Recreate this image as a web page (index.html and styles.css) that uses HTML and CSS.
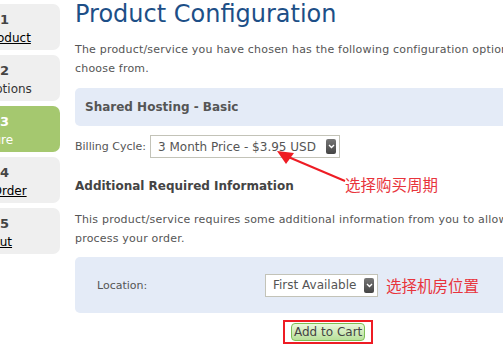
FILE: index.html
```html
<!DOCTYPE html>
<html lang="en">
<head>
    <meta charset="UTF-8">
    <title>Product Configuration</title>
    <link rel="stylesheet" href="styles.css">
</head>
<body>
    <div class="page">
        <div class="steps">
            <div class="step"><span class="step-num">1</span><a class="step-label" href="#">Choose Product</a></div>
            <div class="step"><span class="step-num">2</span><span class="step-label">Product Options</span></div>
            <div class="step active"><span class="step-num">3</span><span class="step-label">Configure</span></div>
            <div class="step"><span class="step-num">4</span><a class="step-label" href="#">Confirm Order</a></div>
            <div class="step"><span class="step-num">5</span><a class="step-label" href="#">Checkout</a></div>
        </div>

        <div class="content">
            <h1>Product Configuration</h1>
            <p class="intro">The product/service you have chosen has the following configuration options for you to choose from.</p>

            <div class="box box-title">Shared Hosting - Basic</div>

            <div class="field-row">
                <span class="field-label">Billing Cycle:</span>
                <div class="fake-select billing">
                    <span>3 Month Price - $3.95 USD</span>
                    <span class="select-btn"><svg width="7" height="5" viewBox="0 0 7 5"><path d="M1 1 L3.5 3.5 L6 1" stroke="#fff" stroke-width="1.4" fill="none"/></svg></span>
                </div>
            </div>

            <h2>Additional Required Information</h2>
            <p class="intro intro-extra">This product/service requires some additional information from you to allow us to process your order.</p>

            <div class="box box-fields">
                <span class="field-label loc">Location:</span>
                <div class="fake-select location">
                    <span>First Available</span>
                    <span class="select-btn"><svg width="7" height="5" viewBox="0 0 7 5"><path d="M1 1 L3.5 3.5 L6 1" stroke="#fff" stroke-width="1.4" fill="none"/></svg></span>
                </div>
                <span class="note">选择机房位置</span>
            </div>

            <div class="actions">
                <span class="highlight"><button class="cart-btn">Add to Cart</button></span>
            </div>
        </div>
    </div>

    <!-- annotation arrow -->
    <div class="annotation">
        <svg width="120" height="50" viewBox="0 0 120 50">
            <line x1="71" y1="32" x2="12" y2="7" stroke="#ee1c24" stroke-width="2"/>
            <polygon points="3,2 20,4 12,15" fill="#ee1c24"/>
        </svg>
        <span class="note billing-note">选择购买周期</span>
    </div>
</body>
</html>
```

FILE: styles.css
```css
* { box-sizing: border-box; }

body {
    margin: 0;
    overflow: hidden;
    font-family: "DejaVu Sans", Verdana, sans-serif;
    font-size: 11px;
    color: #555;
    background: #fff;
}

.page { display: flex; width: 640px; position: relative; }

/* left step tabs, partly off screen */
.steps { width: 75px; flex: none; padding-top: 4px; }

.step {
    width: 152px; height: 46px; margin-left: -92px; margin-bottom: 5px;
    background: #efefef; border-radius: 7px;
    display: flex; flex-direction: column; align-items: center;
    padding-top: 8px; color: #333;
}
.step-num {
    align-self: flex-start; padding-left: 92px;
    font-weight: bold; font-size: 13px; line-height: 16px; color: #444;
}
.step-label { font-size: 12px; line-height: 20px; color: #333; }
a.step-label { color: #000; text-decoration: underline; }
.step.active { background: #a5c86f; }
.step.active .step-num, .step.active .step-label { color: #fff; }

.content { width: 511px; flex: none; }

h1 {
    margin: 0; font-weight: normal; font-size: 24px; line-height: 28px;
    color: #1d4f87;
}

.intro { margin: 12px 0 0; line-height: 19px; letter-spacing: 0.2px; }
.intro-extra { margin-top: 16px; }

.box { background: #e4ebf7; border-radius: 5px; }

.box-title {
    margin-top: 10px; height: 38px; padding: 0 10px;
    display: flex; align-items: center;
    font-weight: bold; font-size: 12px; color: #555;
}

.field-row { display: flex; align-items: center; margin-top: 9px; }
.field-label { margin-right: 4px; }

.fake-select {
    display: flex; align-items: center; justify-content: space-between;
    border: 1px solid #c3c3b8; background: #fff; height: 23px;
    padding: 0 3px 0 7px; font-size: 12px; color: #555;
}
.billing { width: 190px; }
.location { width: 113px; }

.select-btn {
    width: 10px; height: 15px; border-radius: 2px;
    background: linear-gradient(#777, #444);
    display: flex; align-items: center; justify-content: center;
}

h2 {
    margin: 20px 0 0; font-size: 12px; line-height: 16px; color: #444;
}

.box-fields {
    margin-top: 9px; height: 56px; display: flex; align-items: center;
    padding-left: 22px;
}
.loc { width: 164px; }

.note {
    font-family: "Noto Sans CJK SC", sans-serif; font-size: 15.5px;
    color: #e8343c; margin-left: 8px;
}

.actions { display: flex; padding-left: 208px; margin-top: 7px; }
.highlight { display: flex; border: 2px solid #ee1c24; padding: 1px 6px; }
.cart-btn {
    font-family: "DejaVu Sans", Verdana, sans-serif; font-size: 12px; line-height: 14px;
    color: #444; height: 18px;
    background: linear-gradient(#eaf7dc, #b8e09a);
    border: 1px solid #7cbf54; border-radius: 4px; padding: 1px 2px;
}

.annotation { position: absolute; left: 274px; top: 149px; }
.annotation svg { display: block; }
.billing-note { position: absolute; left: 71px; top: 24px; margin: 0; white-space: nowrap; }
```
